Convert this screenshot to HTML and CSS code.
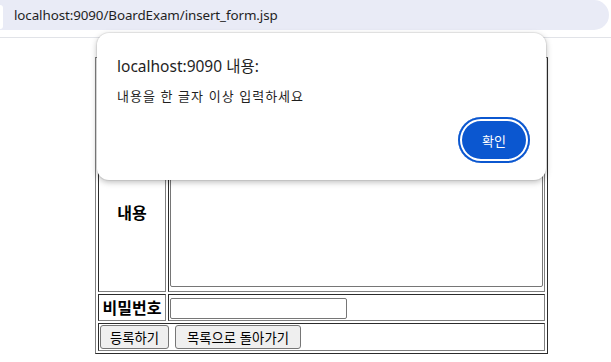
FILE: index.html
```html
<!DOCTYPE html>
<html lang="ko">
<head>
<meta charset="utf-8">
<title>insert_form</title>
<link rel="stylesheet" href="styles.css">
</head>
<body>
<header class="chrome">
  <div class="omnibox">
    <span class="chip"></span>
    <span class="url">localhost:9090/BoardExam/insert_form.jsp</span>
  </div>
</header>
<main class="page">
  <form>
    <table class="board">
      <tr>
        <td class="label"></td>
        <td><input class="field top-field" type="text"></td>
      </tr>
      <tr>
        <td class="label"></td>
        <td><input class="field top-field" type="text"></td>
      </tr>
      <tr>
        <td class="label">내용</td>
        <td><textarea class="content"></textarea></td>
      </tr>
      <tr>
        <td class="label">비밀번호</td>
        <td><input class="field pw" type="password"></td>
      </tr>
      <tr>
        <td colspan="2">
          <div class="actions">
            <button type="button" class="btn btn-submit">등록하기</button>
            <button type="button" class="btn btn-list">목록으로 돌아가기</button>
          </div>
        </td>
      </tr>
    </table>
  </form>
</main>
<div class="dialog">
  <p class="dlg-title">localhost:9090 내용:</p>
  <p class="dlg-msg">내용을 한 글자 이상 입력하세요</p>
  <div class="dlg-actions">
    <button type="button" class="ok">확인</button>
  </div>
</div>
</body>
</html>
```
FILE: styles.css
```css
html, body {
  margin: 0;
  padding: 0;
  background: #fff;
}
body {
  font-family: "Noto Sans CJK KR", "Noto Sans", sans-serif;
  color: #000;
  width: 611px;
  height: 362px;
  overflow: hidden;
}
.chrome {
  height: 37px;
  border-bottom: 1px solid #e1e3e8;
  background: #fff;
}
.omnibox {
  width: 609px;
  height: 30px;
  background: #e9ebf6;
  border-radius: 0 15px 15px 0;
  display: flex;
  align-items: center;
}
.chip {
  width: 3px;
  height: 24px;
  margin-top: 4px;
  background: #fff;
  border-radius: 0 8px 8px 0;
}
.url {
  margin-left: 11px;
  font-family: "Noto Sans", sans-serif;
  font-size: 13.4px;
  color: #1f1f1f;
  letter-spacing: -0.1px;
}
.page {
  padding: 19px 0 0 95px;
}
form { margin: 0; }
.board {
  border: 1px outset gray;
  border-spacing: 2px;
}
.board td {
  border: 1px inset gray;
  padding: 1px;
}
.label {
  width: 64px;
  text-align: center;
  vertical-align: middle;
  font-weight: 700;
  font-size: 16px;
  line-height: 23px;
  white-space: nowrap;
}
.field {
  display: block;
  box-sizing: border-box;
  border: 1px solid #767676;
  border-radius: 2px;
  padding: 1px 2px;
  background: #fff;
}
.top-field {
  width: 200px;
  height: 30px;
}
.pw {
  width: 177px;
  height: 21px;
  margin-top: 2px;
}
.content {
  display: block;
  box-sizing: border-box;
  width: 373px;
  height: 153px;
  margin: 0 0 3px 0;
  border: 1px solid #767676;
  border-radius: 2px;
  resize: none;
}
.actions {
  display: flex;
  gap: 6px;
}
.btn {
  box-sizing: border-box;
  height: 24px;
  padding: 0;
  border: 1px solid #767676;
  border-radius: 3px;
  background: #efefef;
  font-family: "Noto Sans CJK KR", sans-serif;
  font-size: 13.33px;
  color: #000;
}
.btn-submit { width: 69px; }
.btn-list { width: 126px; }

.dialog {
  position: absolute;
  left: 97px;
  top: 33px;
  width: 449px;
  height: 147px;
  box-sizing: border-box;
  padding: 22px 16px 16px 20px;
  background: #fff;
  border-radius: 12px;
  box-shadow: 0 0 0 1px rgba(0,0,0,0.06), 0 2px 6px rgba(0,0,0,0.28);
  color: #1f1f1f;
  display: flex;
  flex-direction: column;
}
.dlg-title {
  margin: 0;
  font-family: "Noto Sans", "Noto Sans CJK KR", sans-serif;
  font-size: 15.5px;
  line-height: 22px;
}
.dlg-msg {
  margin: 10px 0 0 0;
  font-size: 13px;
  line-height: 18px;
  letter-spacing: 1px;
}
.dlg-actions {
  margin-top: 12px;
  display: flex;
  justify-content: flex-end;
}
.ok {
  width: 72px;
  height: 46px;
  border: none;
  border-radius: 23px;
  background: #0b57d0;
  box-shadow: inset 0 0 0 2px #0b57d0, inset 0 0 0 4px #fff;
  color: #fff;
  font-family: "Noto Sans CJK KR", sans-serif;
  font-size: 13px;
  padding: 0;
}
```
